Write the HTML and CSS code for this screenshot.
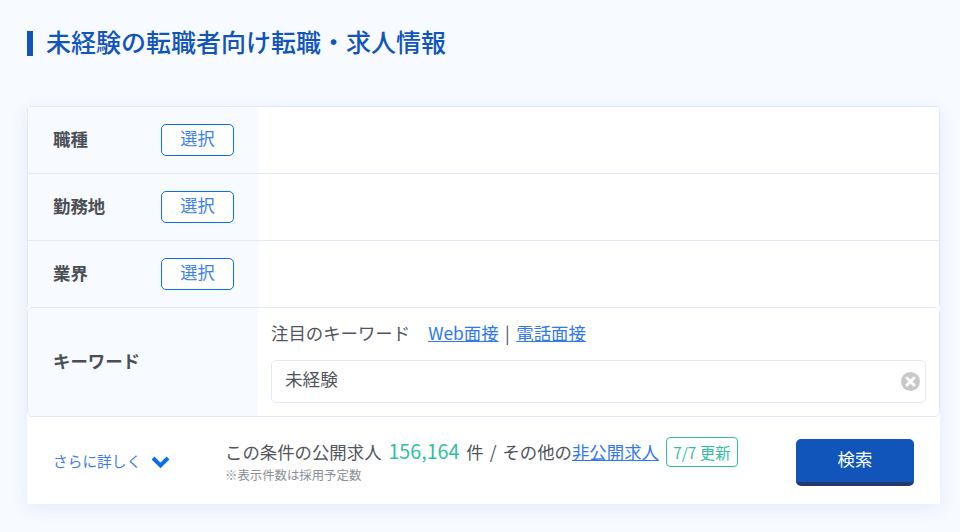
FILE: index.html
```html
<!DOCTYPE html>
<html lang="ja">
<head>
<meta charset="utf-8">
<title>未経験の転職者向け転職・求人情報</title>
<link rel="stylesheet" href="styles.css">
</head>
<body>
<main class="page">
  <h1 class="title">未経験の転職者向け転職・求人情報</h1>
  <section class="card">
    <div class="rows">
      <div class="row">
        <div class="row-head"><span class="row-label">職種</span><button class="select-btn">選択</button></div>
        <div class="row-body"></div>
      </div>
      <div class="row">
        <div class="row-head"><span class="row-label">勤務地</span><button class="select-btn">選択</button></div>
        <div class="row-body"></div>
      </div>
      <div class="row">
        <div class="row-head"><span class="row-label">業界</span><button class="select-btn">選択</button></div>
        <div class="row-body"></div>
      </div>
    </div>
    <div class="keyword">
      <div class="keyword-head"><span class="row-label">キーワード</span></div>
      <div class="keyword-body">
        <p class="hot">注目のキーワード<span class="hot-links"><a href="#">Web面接</a><span class="sep">|</span><a href="#">電話面接</a></span></p>
        <div class="input">
          <span class="input-value">未経験</span>
          <svg class="clear" width="19" height="19" viewBox="0 0 19 19" aria-hidden="true"><circle cx="9.5" cy="9.5" r="9.5" fill="#c8c8c8"/><path d="M6 6l7 7M13 6l-7 7" stroke="#fff" stroke-width="3" stroke-linecap="round"/></svg>
        </div>
      </div>
    </div>
    <div class="foot">
      <a class="more" href="#"><span>さらに詳しく</span><svg class="chevron" width="19" height="14" viewBox="0 0 19 14" aria-hidden="true"><path d="M2 3l7.500 7.500L17 3" fill="none" stroke="#0a6fe8" stroke-width="4"/></svg></a>
      <div class="result">
        <div class="result-main"><span class="line">この条件の公開求人 <span class="count">156,164</span> 件<span class="slash"> / </span>その他の<a href="#">非公開求人</a></span><span class="badge">7/7 更新</span></div>
        <div class="note">※表示件数は採用予定数</div>
      </div>
      <button class="search">検索</button>
    </div>
  </section>
</main>
</body>
</html>
```
FILE: styles.css
```css
* { box-sizing: border-box; }
html, body { margin: 0; padding: 0; }
body {
  width: 960px;
  height: 532px;
  overflow: hidden;
  background: #f7faff;
  font-family: "Noto Sans CJK JP", "Noto Sans", sans-serif;
  color: #50555c;
}
.page { padding: 31px 20px 0 27px; }
.title {
  margin: 0 0 50px;
  height: 25px;
  padding-left: 13px;
  border-left: 6px solid #1155bb;
  font-size: 25px;
  font-weight: 500;
  line-height: 21px;
  color: #1155bb;
  white-space: nowrap;
}
.card {
  width: 913px;
  background: #fff;
  box-shadow: 0 4px 16px rgba(60, 100, 200, .1);
}
.rows {
  border: 1px solid #e3eaf6;
  border-bottom: 0;
  border-radius: 3px 3px 0 0;
}
.row { display: flex; height: 67px; border-bottom: 1px solid #e3eaf6; }
.row:last-child { height: 66px; border-bottom: 0; }
.row-head {
  width: 231px;
  display: flex;
  align-items: center;
  justify-content: space-between;
  padding: 0 25px;
  background: #f7faff;
}
.row-body { flex: 1; background: #fff; }
.row-label { font-size: 17.400px; line-height: 22px; font-weight: 700; color: #4a4f55; margin-top: -2px; }
.select-btn {
  width: 73px;
  height: 32px;
  padding: 0 0 4px;
  background: #fff;
  border: 1px solid #0a6fe8;
  border-radius: 5px;
  color: #3b80ee;
  font: 400 17.200px/1 "Noto Sans CJK JP", sans-serif;
}
.keyword {
  display: flex;
  height: 110px;
  border: 1px solid #e3eaf6;
  border-radius: 5px;
  overflow: hidden;
}
.keyword-head {
  width: 230px;
  display: flex;
  align-items: center;
  padding-left: 25px;
  background: #f7faff;
}
.keyword-body { flex: 1; padding: 13px 13px 0 13px; background: #fff; }
.hot { margin: 0 0 15px; font-size: 17.400px; line-height: 24px; white-space: nowrap; }
.hot-links { margin-left: 18px; }
.hot a, .result a { color: #2f78f0; text-decoration: underline; }
.sep { margin: 0 6.500px; }
.input {
  height: 43px;
  display: flex;
  align-items: center;
  justify-content: space-between;
  padding: 0 5px 0 13px;
  border: 1px solid #e3eaf6;
  border-radius: 5px;
  font-size: 17.600px;
}
.input-value { margin-top: -6px; }
.foot {
  height: 87px;
  display: flex;
  align-items: center;
  padding: 0 26px;
}
.more {
  width: 172px;
  display: flex;
  align-items: center;
  gap: 10px;
  color: #3f7bee;
  font-size: 14.700px;
  text-decoration: none;
}
.chevron { margin-top: 3px; }
.result { flex: 1; }
.result-main { display: flex; align-items: center; height: 30px; }
.line { font-size: 17.400px; line-height: 26px; white-space: pre; word-spacing: 3px; margin-top: -2px; }
.slash { margin: 0 -1px; }
.count { color: #2fbf9f; font-size: 19.700px; }
.badge {
  margin-left: 7px;
  height: 30px;
  width: 72px;
  display: flex;
  align-items: center;
  justify-content: center;
  border: 1px solid #2fbf9f;
  border-radius: 4px;
  color: #2fbf9f;
  font-size: 15.400px;
}
.note { font-size: 12.400px; line-height: 17px; color: #8a8f95; }
.search {
  width: 118px;
  height: 47px;
  margin-top: 4px;
  padding: 0 0 3px;
  border: 0;
  border-bottom: 4px solid #24396f;
  border-radius: 5px;
  background: #1155bb;
  color: #fff;
  font: 400 17.400px/1 "Noto Sans CJK JP", sans-serif;
}
```
